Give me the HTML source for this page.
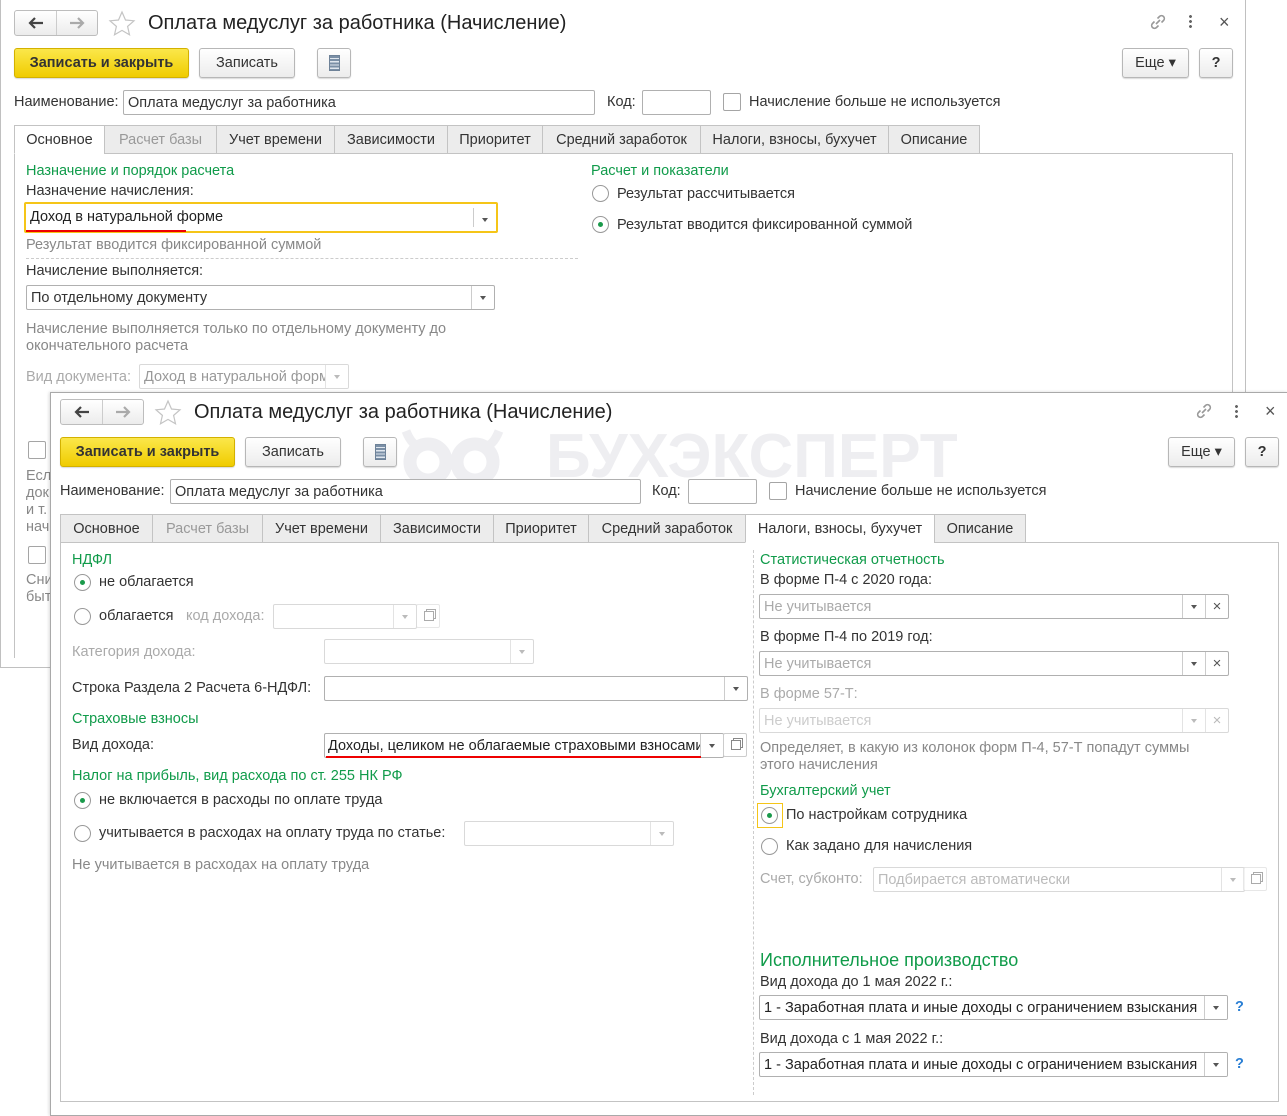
<!DOCTYPE html>
<html><head><meta charset="utf-8">
<style>
*{box-sizing:border-box;margin:0;padding:0}
body{width:1287px;height:1115px;background:#fff;position:relative;overflow:hidden;font-family:"Liberation Sans",Arial,sans-serif;font-size:14.5px;color:#333}
.a{position:absolute;white-space:nowrap}
.t{position:absolute;white-space:nowrap;line-height:20px;height:20px}
.gr{color:#109b4a}
.win{position:absolute;background:#fff;border:1px solid #a9a9a9}
.btn{position:absolute;border:1px solid #b7b7b7;border-radius:3px;background:linear-gradient(#fff,#ececec);box-shadow:0 1px 1px rgba(0,0,0,.15);text-align:center;line-height:29px;color:#333}
.yb{background:linear-gradient(#fbe74a,#f0cc00);border-color:#d3b100;font-weight:bold;color:#333}
.inp{position:absolute;border:1px solid #b0b0b0;border-radius:2px;background:#fff;line-height:24px;padding-left:4px;overflow:hidden;white-space:nowrap}
.dis{border-color:#d9d9d9}
.dd{position:absolute;top:0;bottom:0;width:23px;border-left:1px solid #ccc}
.dd:after{content:"";position:absolute;left:8px;top:10px;border:3.5px solid transparent;border-top:4px solid #555}
.dis .dd{border-left-color:#e3e3e3}.dis .dd:after{border-top-color:#bbb}
.tab{position:absolute;height:29px;border:1px solid #c3c3c3;background:#ececec;line-height:28px;text-align:center;color:#333}
.tab.on{background:#fff;border-bottom-color:#fff}
.rad{position:absolute;width:17px;height:17px;border:1px solid #999;border-radius:50%;background:#fff}
.rad.on:after{content:"";position:absolute;left:5px;top:5px;width:5px;height:5px;border-radius:50%;background:#1a9a4b}
.chk{position:absolute;width:18px;height:18px;border:1px solid #a5a5a5;border-radius:2px;background:#fff}
.nav{position:absolute;width:84px;height:26px;border:1px solid #bdbdbd;border-radius:3px;background:linear-gradient(#fff,#ececec)}
.cp{position:absolute;width:24px;height:24px;border:1px solid #ccc;border-radius:2px;background:#fff}
.cp:after{content:"";position:absolute;left:7px;top:6px;width:8px;height:8px;border:1px solid #888;box-shadow:2px -2px 0 -1px #fff,2px -2px 0 0 #888}
</style></head><body>

<!-- OUTER WINDOW -->
<div class="win" style="left:0;top:0;width:1246px;height:668px;border-color:#c0c0c0;border-top:none"></div>
<div class="nav" style="left:14px;top:10px"><div class="a" style="left:41px;top:0;width:1px;height:24px;background:#ccc"></div>
<svg class="a" style="left:12px;top:5px" width="18" height="14" viewBox="0 0 18 14"><path d="M16 7H3M8 2L3 7l5 5" fill="none" stroke="#444" stroke-width="2.2"/></svg>
<svg class="a" style="left:53px;top:5px" width="18" height="14" viewBox="0 0 18 14"><path d="M2 7h13M10 2l5 5-5 5" fill="none" stroke="#aaa" stroke-width="2.2"/></svg></div>
<svg class="a" style="left:108px;top:10px" width="28" height="28" viewBox="0 0 28 28"><path d="M14 2l3.5 8 8.5.8-6.4 5.6 1.9 8.4L14 20.4 6.5 24.8l1.9-8.4L2 10.8l8.5-.8z" fill="none" stroke="#c4c4c4" stroke-width="1.2"/></svg>
<div class="t" style="left:148px;top:11px;font-size:20px;line-height:24px;height:24px;color:#222">Оплата медуслуг за работника (Начисление)</div>
<svg class="a" style="left:1148px;top:12px" width="20" height="20" viewBox="0 0 20 20"><path d="M8 12l4-4M6.5 9.5l-2 2a2.8 2.8 0 004 4l2-2M13.5 10.5l2-2a2.8 2.8 0 00-4-4l-2 2" fill="none" stroke="#999" stroke-width="1.6"/></svg>
<div class="a" style="left:1189px;top:14px;width:3px;height:14px;background:radial-gradient(circle,#666 1.3px,transparent 1.6px) 0 0/3px 5px"></div>
<div class="t" style="left:1219px;top:12px;font-size:18px;color:#555">×</div>
<div class="btn yb" style="left:14px;top:48px;width:175px;height:30px">Записать и закрыть</div>
<div class="btn" style="left:199px;top:48px;width:96px;height:30px">Записать</div>
<div class="btn" style="left:317px;top:48px;width:34px;height:30px"><div class="a" style="left:11px;top:6px;width:11px;height:16px;background:repeating-linear-gradient(#7a8fa6 0 2px,#dfe6ee 2px 3.2px);border:1px solid #6e8298"></div></div>
<div class="btn" style="left:1122px;top:48px;width:67px;height:30px">Еще ▾</div>
<div class="btn" style="left:1199px;top:48px;width:34px;height:30px;font-weight:bold">?</div>
<div class="t" style="left:14px;top:92px">Наименование:</div>
<div class="inp" style="left:123px;top:90px;width:472px;height:25px">Оплата медуслуг за работника</div>
<div class="t" style="left:607px;top:92px">Код:</div>
<div class="inp" style="left:642px;top:90px;width:69px;height:25px"></div>
<div class="chk" style="left:723px;top:93px"></div>
<div class="t" style="left:749px;top:92px">Начисление больше не используется</div>
<div class="a" style="left:14px;top:153px;width:1219px;height:505px;border:1px solid #c3c3c3;border-bottom:none"></div>
<div class="tab on" style="left:14px;top:125px;width:91px">Основное</div>
<div class="tab" style="left:104px;top:125px;width:113px;color:#999">Расчет базы</div>
<div class="tab" style="left:216px;top:125px;width:119px">Учет времени</div>
<div class="tab" style="left:334px;top:125px;width:114px">Зависимости</div>
<div class="tab" style="left:447px;top:125px;width:96px">Приоритет</div>
<div class="tab" style="left:542px;top:125px;width:159px">Средний заработок</div>
<div class="tab" style="left:700px;top:125px;width:189px">Налоги, взносы, бухучет</div>
<div class="tab" style="left:888px;top:125px;width:92px">Описание</div>
<div class="t gr" style="left:26px;top:161px">Назначение и порядок расчета</div>
<div class="t" style="left:26px;top:181px">Назначение начисления:</div>
<div class="inp" style="left:24px;top:202px;width:474px;height:31px;border:2px solid #f5c518;line-height:27px;color:#222">Доход в натуральной форме<div class="dd" style="right:0;top:4px;bottom:4px"></div></div>
<div class="a" style="left:26px;top:230px;width:160px;height:2px;background:#e00"></div>
<div class="t" style="left:26px;top:235px;color:#888">Результат вводится фиксированной суммой</div>
<div class="a" style="left:26px;top:258px;width:552px;border-top:1px dashed #ccc"></div>
<div class="t" style="left:26px;top:261px">Начисление выполняется:</div>
<div class="inp" style="left:26px;top:285px;width:469px;height:25px">По отдельному документу<div class="dd" style="right:0"></div></div>
<div class="t" style="left:26px;top:319px;color:#888">Начисление выполняется только по отдельному документу до</div>
<div class="t" style="left:26px;top:336px;color:#888">окончательного расчета</div>
<div class="t" style="left:26px;top:367px;color:#aaa">Вид документа:</div>
<div class="inp dis" style="left:139px;top:364px;width:210px;height:25px;color:#999">Доход в натуральной форм<div class="dd" style="right:0;background:#fff"></div></div>
<div class="t gr" style="left:591px;top:161px">Расчет и показатели</div>
<div class="rad" style="left:592px;top:185px"></div><div class="t" style="left:617px;top:184px">Результат рассчитывается</div>
<div class="rad on" style="left:592px;top:216px"></div><div class="t" style="left:617px;top:215px">Результат вводится фиксированной суммой</div>
<div class="chk" style="left:28px;top:441px"></div>
<div class="t" style="left:26px;top:466px;color:#888">Есл</div>
<div class="t" style="left:26px;top:483px;color:#888">док</div>
<div class="t" style="left:26px;top:500px;color:#888">и т.</div>
<div class="t" style="left:26px;top:517px;color:#888">нач</div>
<div class="chk" style="left:28px;top:546px"></div>
<div class="t" style="left:26px;top:570px;color:#888">Сни</div>
<div class="t" style="left:26px;top:587px;color:#888">быт</div>

<!-- INNER WINDOW -->
<div class="win" style="left:50px;top:392px;width:1238px;height:724px;box-shadow:-1px 0 3px rgba(0,0,0,.15)"></div>
<!-- watermark -->
<svg class="a" style="left:400px;top:428px" width="105" height="72" viewBox="0 0 105 72"><g fill="none" stroke="#eeeef1" stroke-width="13"><circle cx="28" cy="34" r="18"/><circle cx="75" cy="34" r="18"/></g><path d="M6 3 Q12 18 20 18 M99 3 Q93 18 85 18" stroke="#eeeef1" stroke-width="9" fill="none"/><path d="M46 52 L51 70 L57 52z" fill="#eeeef1"/></svg>
<div class="a" style="left:546px;top:422px;font-size:62px;font-weight:bold;color:#eeeef1;line-height:70px">БУХЭКСПЕРТ</div>

<div class="nav" style="left:60px;top:399px"><div class="a" style="left:41px;top:0;width:1px;height:24px;background:#ccc"></div>
<svg class="a" style="left:12px;top:5px" width="18" height="14" viewBox="0 0 18 14"><path d="M16 7H3M8 2L3 7l5 5" fill="none" stroke="#444" stroke-width="2.2"/></svg>
<svg class="a" style="left:53px;top:5px" width="18" height="14" viewBox="0 0 18 14"><path d="M2 7h13M10 2l5 5-5 5" fill="none" stroke="#aaa" stroke-width="2.2"/></svg></div>
<svg class="a" style="left:154px;top:399px" width="28" height="28" viewBox="0 0 28 28"><path d="M14 2l3.5 8 8.5.8-6.4 5.6 1.9 8.4L14 20.4 6.5 24.8l1.9-8.4L2 10.8l8.5-.8z" fill="none" stroke="#c4c4c4" stroke-width="1.2"/></svg>
<div class="t" style="left:194px;top:400px;font-size:20px;line-height:24px;height:24px;color:#222">Оплата медуслуг за работника (Начисление)</div>
<svg class="a" style="left:1194px;top:401px" width="20" height="20" viewBox="0 0 20 20"><path d="M8 12l4-4M6.5 9.5l-2 2a2.8 2.8 0 004 4l2-2M13.5 10.5l2-2a2.8 2.8 0 00-4-4l-2 2" fill="none" stroke="#999" stroke-width="1.6"/></svg>
<div class="a" style="left:1235px;top:404px;width:3px;height:14px;background:radial-gradient(circle,#666 1.3px,transparent 1.6px) 0 0/3px 5px"></div>
<div class="t" style="left:1265px;top:401px;font-size:18px;color:#555">×</div>
<div class="btn yb" style="left:60px;top:437px;width:175px;height:30px">Записать и закрыть</div>
<div class="btn" style="left:245px;top:437px;width:96px;height:30px">Записать</div>
<div class="btn" style="left:363px;top:437px;width:34px;height:30px"><div class="a" style="left:11px;top:6px;width:11px;height:16px;background:repeating-linear-gradient(#7a8fa6 0 2px,#dfe6ee 2px 3.2px);border:1px solid #6e8298"></div></div>
<div class="btn" style="left:1168px;top:437px;width:67px;height:30px">Еще ▾</div>
<div class="btn" style="left:1245px;top:437px;width:34px;height:30px;font-weight:bold">?</div>
<div class="t" style="left:60px;top:481px">Наименование:</div>
<div class="inp" style="left:170px;top:479px;width:471px;height:25px">Оплата медуслуг за работника</div>
<div class="t" style="left:652px;top:481px">Код:</div>
<div class="inp" style="left:688px;top:479px;width:69px;height:25px"></div>
<div class="chk" style="left:769px;top:482px"></div>
<div class="t" style="left:795px;top:481px">Начисление больше не используется</div>
<div class="a" style="left:60px;top:542px;width:1219px;height:560px;border:1px solid #c3c3c3"></div>
<div class="tab" style="left:60px;top:514px;width:93px">Основное</div>
<div class="tab" style="left:152px;top:514px;width:111px;color:#999">Расчет базы</div>
<div class="tab" style="left:262px;top:514px;width:119px">Учет времени</div>
<div class="tab" style="left:380px;top:514px;width:114px">Зависимости</div>
<div class="tab" style="left:493px;top:514px;width:96px">Приоритет</div>
<div class="tab" style="left:588px;top:514px;width:158px">Средний заработок</div>
<div class="tab on" style="left:745px;top:514px;width:190px">Налоги, взносы, бухучет</div>
<div class="tab" style="left:934px;top:514px;width:92px">Описание</div>

<div class="t gr" style="left:72px;top:550px">НДФЛ</div>
<div class="rad on" style="left:74px;top:574px"></div><div class="t" style="left:99px;top:572px">не облагается</div>
<div class="rad" style="left:74px;top:608px"></div><div class="t" style="left:99px;top:606px">облагается</div>
<div class="t" style="left:186px;top:606px;color:#aaa">код дохода:</div>
<div class="inp dis" style="left:273px;top:604px;width:144px;height:25px"><div class="dd" style="right:0"></div></div>
<div class="cp" style="left:416px;top:604px;border-color:#ddd;opacity:.7"></div>
<div class="t" style="left:72px;top:642px;color:#aaa">Категория дохода:</div>
<div class="inp dis" style="left:324px;top:639px;width:210px;height:25px"><div class="dd" style="right:0"></div></div>
<div class="t" style="left:72px;top:678px">Строка Раздела 2 Расчета 6-НДФЛ:</div>
<div class="inp" style="left:324px;top:676px;width:424px;height:25px"><div class="dd" style="right:0"></div></div>
<div class="t gr" style="left:72px;top:709px">Страховые взносы</div>
<div class="t" style="left:72px;top:735px">Вид дохода:</div>
<div class="inp" style="left:324px;top:733px;width:400px;height:25px;color:#222;padding-left:3px">Доходы, целиком не облагаемые страховыми взносами<div class="dd" style="right:0;background:#fff"></div></div>
<div class="cp" style="left:723px;top:733px"></div>
<div class="a" style="left:326px;top:756px;width:375px;height:2px;background:#e00"></div>
<div class="t gr" style="left:72px;top:766px">Налог на прибыль, вид расхода по ст. 255 НК РФ</div>
<div class="rad on" style="left:74px;top:792px"></div><div class="t" style="left:99px;top:790px">не включается в расходы по оплате труда</div>
<div class="rad" style="left:74px;top:825px"></div><div class="t" style="left:99px;top:823px">учитывается в расходах на оплату труда по статье:</div>
<div class="inp dis" style="left:464px;top:821px;width:210px;height:25px"><div class="dd" style="right:0"></div></div>
<div class="t" style="left:72px;top:855px;color:#888">Не учитывается в расходах на оплату труда</div>

<div class="a" style="left:753px;top:550px;height:545px;border-left:1px dashed #ccc"></div>

<div class="t gr" style="left:760px;top:550px">Статистическая отчетность</div>
<div class="t" style="left:760px;top:570px">В форме П-4 с 2020 года:</div>
<div class="inp" style="left:759px;top:594px;width:470px;height:25px;color:#aaa">Не учитывается<div class="dd" style="right:23px"></div><div class="a" style="right:0;top:0;width:23px;height:23px;border-left:1px solid #ccc;text-align:center;color:#555;font-size:15px">×</div></div>
<div class="t" style="left:760px;top:627px">В форме П-4 по 2019 год:</div>
<div class="inp" style="left:759px;top:651px;width:470px;height:25px;color:#aaa">Не учитывается<div class="dd" style="right:23px"></div><div class="a" style="right:0;top:0;width:23px;height:23px;border-left:1px solid #ccc;text-align:center;color:#555;font-size:15px">×</div></div>
<div class="t" style="left:760px;top:684px;color:#aaa">В форме 57-Т:</div>
<div class="inp dis" style="left:759px;top:708px;width:470px;height:25px;color:#ccc">Не учитывается<div class="dd" style="right:23px"></div><div class="a" style="right:0;top:0;width:23px;height:23px;border-left:1px solid #e3e3e3;text-align:center;color:#bbb;font-size:15px">×</div></div>
<div class="t" style="left:760px;top:738px;color:#888">Определяет, в какую из колонок форм П-4, 57-Т попадут суммы</div>
<div class="t" style="left:760px;top:755px;color:#888">этого начисления</div>
<div class="t gr" style="left:760px;top:781px">Бухгалтерский учет</div>
<div class="a" style="left:757px;top:803px;width:26px;height:25px;border:1px solid #f5c518"></div>
<div class="rad on" style="left:761px;top:807px"></div><div class="t" style="left:786px;top:805px">По настройкам сотрудника</div>
<div class="rad" style="left:761px;top:838px"></div><div class="t" style="left:786px;top:836px">Как задано для начисления</div>
<div class="t" style="left:760px;top:869px;color:#aaa">Счет, субконто:</div>
<div class="inp dis" style="left:873px;top:867px;width:372px;height:25px;color:#bbb">Подбирается автоматически<div class="dd" style="right:0"></div></div>
<div class="cp" style="left:1243px;top:867px;border-color:#ddd;opacity:.7"></div>
<div class="t gr" style="left:760px;top:949px;font-size:18px;line-height:22px;height:22px">Исполнительное производство</div>
<div class="t" style="left:760px;top:972px">Вид дохода до 1 мая 2022 г.:</div>
<div class="inp" style="left:759px;top:995px;width:469px;height:25px;color:#222">1 - Заработная плата и иные доходы с ограничением взыскания<div class="dd" style="right:0;background:#fff"></div></div>
<div class="t" style="left:1235px;top:997px;color:#2a7fd4;font-weight:bold">?</div>
<div class="t" style="left:760px;top:1029px">Вид дохода с 1 мая 2022 г.:</div>
<div class="inp" style="left:759px;top:1052px;width:469px;height:25px;color:#222">1 - Заработная плата и иные доходы с ограничением взыскания<div class="dd" style="right:0;background:#fff"></div></div>
<div class="t" style="left:1235px;top:1054px;color:#2a7fd4;font-weight:bold">?</div>
</body></html>
